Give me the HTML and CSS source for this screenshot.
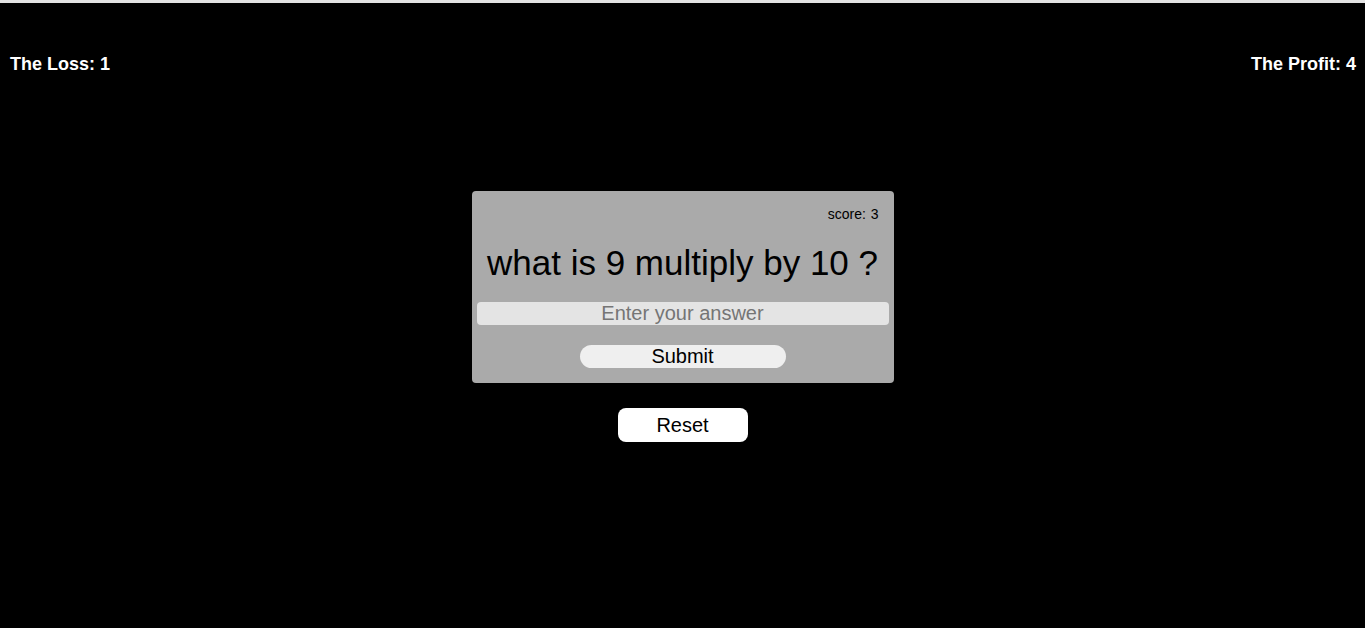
FILE: index.html
```html
<!DOCTYPE html>
<html lang="en">
<head>
<meta charset="utf-8">
<title>Quiz</title>
<link rel="stylesheet" href="styles.css">
</head>
<body>
  <header class="stats">
    <div class="stat">The Loss: 1</div>
    <div class="stat">The Profit: 4</div>
  </header>
  <main class="main">
    <section class="card">
      <div class="score">score: 3</div>
      <h1 class="question">what is 9 multiply by 10 ?</h1>
      <input class="answer" type="text" placeholder="Enter your answer">
      <button class="submit" type="button">Submit</button>
    </section>
    <button class="reset" type="button">Reset</button>
  </main>
</body>
</html>
```

FILE: styles.css
```css
html, body {
  margin: 0;
  padding: 0;
}

body {
  background: #000;
  border-top: 3px solid #e3e3e3;
  min-height: 625px;
  font-family: "Liberation Sans", Arial, sans-serif;
  color: #000;
}

.stats {
  display: flex;
  justify-content: space-between;
  padding: 51px 9px 0 10px;
}

.stat {
  color: #fff;
  font-weight: bold;
  font-size: 18px;
  line-height: 21px;
}

.main {
  display: flex;
  flex-direction: column;
  align-items: center;
  margin-top: 116px;
}

.card {
  width: 422px;
  box-sizing: border-box;
  background: #aaaaaa;
  border-radius: 4px;
  padding: 15px 5px 15px;
  display: flex;
  flex-direction: column;
  align-items: center;
}

.score {
  align-self: flex-end;
  margin-right: 10px;
  font-size: 14px;
  line-height: 16px;
  word-spacing: 1px;
}

.question {
  margin: 21px 0 0;
  font-size: 35px;
  font-weight: normal;
  line-height: 40px;
}

.answer {
  margin-top: 19px;
  width: 100%;
  height: 23px;
  box-sizing: border-box;
  border: none;
  border-radius: 4px;
  background: #e4e4e4;
  font-family: "Liberation Sans", Arial, sans-serif;
  font-size: 20px;
  text-align: center;
  padding: 0;
  outline: none;
}

.answer::placeholder {
  color: #757575;
}

.submit {
  margin-top: 20px;
  width: 206px;
  height: 23px;
  border: none;
  border-radius: 12px;
  background: #efefef;
  font-family: "Liberation Sans", Arial, sans-serif;
  font-size: 20px;
  line-height: 23px;
  padding: 0;
  color: #000;
}

.reset {
  margin-top: 25px;
  width: 130px;
  height: 34px;
  border: none;
  border-radius: 8px;
  background: #fff;
  font-family: "Liberation Sans", Arial, sans-serif;
  font-size: 20px;
  padding: 0;
  color: #000;
}
```
